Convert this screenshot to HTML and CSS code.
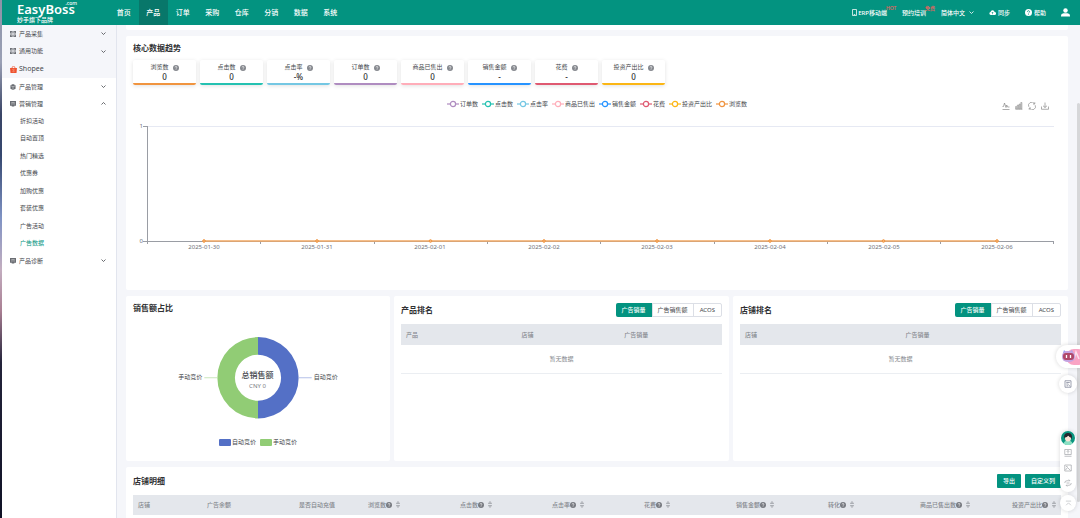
FILE: index.html
```html
<!DOCTYPE html>
<html lang="zh-CN">
<head>
<meta charset="utf-8">
<title>EasyBoss - 广告数据</title>
<link rel="stylesheet" href="styles.css">
</head>
<body>
<svg class="defs" aria-hidden="true">
  <symbol id="help" viewBox="0 0 12 12"><circle cx="6" cy="6" r="6" fill="currentColor"/><path d="M4.2 4.8a1.8 1.8 0 1 1 2.6 1.5q-.8.4-.8 1.2M6 8.6v1.2" fill="none" stroke="var(--mark, #fff)" stroke-width="1.3"/></symbol>
  <symbol id="down" viewBox="0 0 10 10"><path d="M1 3l4 4 4-4" fill="none" stroke="currentColor" stroke-width="1.6"/></symbol>
  <symbol id="up" viewBox="0 0 10 10"><path d="M1 7l4-4 4 4" fill="none" stroke="currentColor" stroke-width="1.6"/></symbol>
  <symbol id="sort" viewBox="0 0 8 14"><path d="M1 5l3-4 3 4zM1 9l3 4 3-4z" fill="none" stroke="currentColor" stroke-width="1.2"/></symbol>
  <symbol id="apps" viewBox="0 0 14 14"><path d="M0 0h6v6H0zM8 0h6v6H8zM0 8h6v6H0zM8 8h6v6H8z" fill="currentColor"/><path d="M2 3h2M10 3h2M2 11h2M10 11h2" stroke="#f5f6fa" stroke-width="1.600"/></symbol>
  <symbol id="board" viewBox="0 0 14 14"><path d="M0 0h14v11H0zM4 11h6v2H4z" fill="currentColor"/><path d="M3 4h8M3 7h3M8 7h3" stroke="#fff" stroke-width="1.200"/></symbol>
  <symbol id="ring" viewBox="0 0 12 8"><path d="M0 4h12" stroke="currentColor" stroke-width="1.200"/><circle cx="6" cy="4" r="2.600" fill="#fff" stroke="currentColor" stroke-width="1.200"/></symbol>
</svg>

<div class="edge"></div>
<div class="app">
  <header class="topbar">
    <a class="logo" href="#"><span class="brand">EasyBoss<i>.com</i></span><span class="slogan">妙手旗下品牌</span></a>
    <nav class="nav">
      <a href="#">首页</a><a href="#" class="active">产品</a><a href="#">订单</a><a href="#">采购</a><a href="#">仓库</a><a href="#">分销</a><a href="#">数据</a><a href="#">系统</a>
    </nav>
    <div class="tools">
      <a href="#" class="erp"><svg class="ic" viewBox="0 0 12 14"><path d="M2 1h8v12H2zM4.500 11h3" fill="none" stroke="currentColor" stroke-width="1.500"/></svg>ERP移动端<sup>HOT</sup></a>
      <a href="#" class="train">预约培训<sup>免费</sup></a>
      <a href="#" class="lang">简体中文<svg class="ic"><use href="#down"/></svg></a>
      <a href="#" class="sync"><svg class="ic" viewBox="0 0 14 12"><path d="M3.500 11a3.200 3.200 0 0 1-.5-6.200 4.200 4.200 0 0 1 8.200.2A3 3 0 0 1 11 11z" fill="currentColor"/><path d="M7 9.500V5.500M5.300 7L7 5.300 8.700 7" fill="none" stroke="#039380" stroke-width="1.200"/></svg>同步</a>
      <a href="#" class="assist"><svg class="ic"><use href="#help"/></svg>帮助</a>
      <a href="#" class="user" aria-label="账号"><svg viewBox="0 0 18 18"><circle cx="9" cy="5" r="4.500" fill="#fff"/><path d="M0 17v-2q0-4 5-4.500h8q5 .5 5 4.500v2z" fill="#fff"/></svg></a>
    </div>
  </header>

  <div class="body">
    <aside class="side">
      <div class="group head">
        <a href="#"><svg class="ic"><use href="#apps"/></svg>产品采集<svg class="arrow"><use href="#down"/></svg></a>
        <a href="#"><svg class="ic"><use href="#apps"/></svg>通用功能<svg class="arrow"><use href="#down"/></svg></a>
        <a href="#" class="shop"><svg class="ic" viewBox="0 0 14 14"><path d="M0 4h14l-1 10H1z" fill="#ee5330"/><path d="M4 4q0-3.300 3-3.300T10 4" fill="none" stroke="#ee5330" stroke-width="1.400"/><path d="M9 6.800q-3.500-1.300-3.700.5c0 1.600 3.700 1.200 3.500 3-.3 1.500-2.500 1.500-4 .3" fill="none" stroke="#f9b9a8"/></svg>Shopee</a>
      </div>
      <div class="group">
        <a href="#"><svg class="ic" viewBox="0 0 14 14"><path d="M7 0l6 3v8l-6 3-6-3V3z" fill="currentColor"/><path d="M1.500 4L7 6.500 12.500 4M7 6.500V13" fill="none" stroke="#fff"/></svg>产品管理<svg class="arrow"><use href="#down"/></svg></a>
        <a href="#"><svg class="ic"><use href="#board"/></svg>营销管理<svg class="arrow"><use href="#up"/></svg></a>
      </div>
      <div class="group sub">
        <a href="#">折扣活动</a><a href="#">自动置顶</a><a href="#">热门精选</a><a href="#">优惠券</a><a href="#">加购优惠</a><a href="#">套装优惠</a><a href="#">广告活动</a><a href="#" class="on">广告数据</a>
      </div>
      <div class="group">
        <a href="#"><svg class="ic"><use href="#board"/></svg>产品诊断<svg class="arrow"><use href="#down"/></svg></a>
      </div>
    </aside>

    <main class="main">
      <section class="panel filters"></section>

      <section class="panel trend">
        <h2>核心数据趋势</h2>
        <div class="cards">
          <div class="card c-orange"><span>浏览数<svg><use href="#help"/></svg></span><b>0</b></div>
          <div class="card c-teal"><span>点击数<svg><use href="#help"/></svg></span><b>0</b></div>
          <div class="card c-sky"><span>点击率<svg><use href="#help"/></svg></span><b>-%</b></div>
          <div class="card c-purple"><span>订单数<svg><use href="#help"/></svg></span><b>0</b></div>
          <div class="card c-pink"><span>商品已售出<svg><use href="#help"/></svg></span><b>0</b></div>
          <div class="card c-blue"><span>销售金额<svg><use href="#help"/></svg></span><b>-</b></div>
          <div class="card c-red"><span>花费<svg><use href="#help"/></svg></span><b>-</b></div>
          <div class="card c-gold"><span>投资产出比<svg><use href="#help"/></svg></span><b>0</b></div>
        </div>
        <div class="legend">
          <span><svg class="c-purple"><use href="#ring"/></svg>订单数</span>
          <span><svg class="c-teal"><use href="#ring"/></svg>点击数</span>
          <span><svg class="c-sky"><use href="#ring"/></svg>点击率</span>
          <span><svg class="c-pink"><use href="#ring"/></svg>商品已售出</span>
          <span><svg class="c-blue"><use href="#ring"/></svg>销售金额</span>
          <span><svg class="c-red"><use href="#ring"/></svg>花费</span>
          <span><svg class="c-gold"><use href="#ring"/></svg>投资产出比</span>
          <span><svg class="c-orange"><use href="#ring"/></svg>浏览数</span>
          <div class="toolbox">
            <svg viewBox="0 0 16 16"><path d="M1 9h2l2-7 3 9 1.500-5 1.500 4h4M1 15h14" fill="none" stroke="currentColor" stroke-width="1.300"/></svg>
            <svg viewBox="0 0 16 16"><path d="M1 9h2.500v5H1zM4.500 6H7v8H4.500zM8 4h2.500v10H8zM11.500 1H14v13h-2.500zM1 15h14" fill="#ccc" stroke="currentColor" stroke-width=".8"/></svg>
            <svg viewBox="0 0 16 16"><path d="M1.500 9.500a6.500 6.500 0 0 1 11.500-6M14.500 6.500a6.500 6.500 0 0 1-11.500 6M13.500.5v3.500H10M2.500 15.500V12H6" fill="none" stroke="currentColor" stroke-width="1.300"/></svg>
            <svg viewBox="0 0 16 16"><path d="M8 1v10M4 7.500L8 11l4-3.500M1 9v5.500h14V9" fill="none" stroke="currentColor" stroke-width="1.300"/></svg>
          </div>
        </div>
        <svg class="chart" viewBox="0 0 928 167" role="img" aria-label="核心数据趋势">
          <path d="M15 10.500H921" stroke="#e6e9f3"/>
          <path d="M10 10.500h5M14.500 10v118M10 125.500h911M127.500 126v2M241.500 126v2M354.500 126v2M467.500 126v2M581.500 126v2M694.500 126v2M807.500 126v2M920.500 126v2" fill="none" stroke="#9a9da4"/>
          <path d="M71 125H864" stroke="#f2a863" stroke-width="1.300"/>
          <g fill="#f7b77c" stroke="#f0943f" stroke-width="1"><circle cx="71" cy="125" r="1.300"/><circle cx="184" cy="125" r="1.300"/><circle cx="297.500" cy="125" r="1.300"/><circle cx="411" cy="125" r="1.300"/><circle cx="524" cy="125" r="1.300"/><circle cx="637" cy="125" r="1.300"/><circle cx="750.500" cy="125" r="1.300"/><circle cx="864" cy="125" r="1.300"/></g>
          <g class="tick"><text x="10" y="12" class="end">1</text><text x="10" y="127" class="end">0</text></g>
          <g class="tick mid"><text x="71" y="133">2025-01-30</text><text x="184" y="133">2025-01-31</text><text x="297" y="133">2025-02-01</text><text x="411" y="133">2025-02-02</text><text x="524" y="133">2025-02-03</text><text x="637" y="133">2025-02-04</text><text x="751" y="133">2025-02-05</text><text x="864" y="133">2025-02-06</text></g>
        </svg>
      </section>

      <div class="row">
        <section class="panel share">
          <h2>销售额占比</h2>
          <svg class="pie" viewBox="0 0 249 122" role="img" aria-label="销售额占比">
            <path d="M124.500 23a40.500 40.500 0 0 1 0 81v-17.500a23 23 0 0 0 0-46z" fill="#5470c6"/>
            <path d="M124.500 23a40.500 40.500 0 0 0 0 81v-17.500a23 23 0 0 1 0-46z" fill="#91cc75"/>
            <path d="M165 63.500h13" stroke="#b4c0e8"/><path d="M71 63.500h13" stroke="#c9e6bb"/>
            <text x="124" y="64" class="total">总销售额</text><text x="124" y="74" class="cny">CNY 0</text>
            <text x="180" y="65">自动竞价</text><text x="69" y="65" class="end">手动竞价</text>
          </svg>
          <div class="pielegend"><span class="auto">自动竞价</span><span class="manual">手动竞价</span></div>
        </section>

        <section class="panel rank">
          <div class="bar"><h2>产品排名</h2><div class="seg"><button class="on">广告销量</button><button>广告销售额</button><button>ACOS</button></div></div>
          <table class="t-product"><thead><tr><th>产品</th><th>店铺</th><th>广告销量</th></tr></thead><tbody><tr><td colspan="3">暂无数据</td></tr></tbody></table>
        </section>

        <section class="panel rank">
          <div class="bar"><h2>店铺排名</h2><div class="seg"><button class="on">广告销量</button><button>广告销售额</button><button>ACOS</button></div></div>
          <table class="t-shop"><thead><tr><th>店铺</th><th>广告销量</th></tr></thead><tbody><tr><td colspan="2">暂无数据</td></tr></tbody></table>
        </section>
      </div>

      <section class="panel detail">
        <div class="bar"><h2>店铺明细</h2><div class="actions"><button>导出</button><button>自定义列</button></div></div>
        <table class="t-detail">
          <colgroup><col class="s"><col class="m"><col class="s"><col class="m"><col class="m"><col class="m"><col class="m"><col class="m"><col class="m"><col class="m"><col></colgroup>
          <thead><tr>
            <th>店铺</th><th>广告余额</th><th>是否自动充值</th>
            <th>浏览数<svg class="q"><use href="#help"/></svg><svg class="s"><use href="#sort"/></svg></th>
            <th>点击数<svg class="q"><use href="#help"/></svg><svg class="s"><use href="#sort"/></svg></th>
            <th>点击率<svg class="q"><use href="#help"/></svg><svg class="s"><use href="#sort"/></svg></th>
            <th>花费<svg class="q"><use href="#help"/></svg><svg class="s"><use href="#sort"/></svg></th>
            <th>销售金额<svg class="q"><use href="#help"/></svg><svg class="s"><use href="#sort"/></svg></th>
            <th>转化<svg class="q"><use href="#help"/></svg><svg class="s"><use href="#sort"/></svg></th>
            <th>商品已售出数<svg class="q"><use href="#help"/></svg><svg class="s"><use href="#sort"/></svg></th>
            <th>投资产出比<svg class="q"><use href="#help"/></svg><svg class="s"><use href="#sort"/></svg></th>
          </tr></thead>
        </table>
      </section>
    </main>
  </div>
</div>

<div class="scroll"></div>
<button class="float robot" aria-label="智能助手"><svg viewBox="0 0 24 23"><rect x="10" y="4" width="20" height="16" rx="8" fill="#f9a3c4"/><path d="M18 14l2-7 3 7" fill="none" stroke="#fce0ec" stroke-width="1.500"/><path d="M7 8l1-3 2 2h4l2-2 1 3" fill="#8f9cf5"/><rect x="6" y="6" width="13" height="11" rx="5" fill="#c5a3e0"/><rect x="7" y="8" width="11" height="7" rx="3" fill="#b0486a"/><path d="M10.500 10v3M14.500 10v3" stroke="#fff" stroke-width="1.300"/></svg></button>
<button class="float note" aria-label="记录"><svg viewBox="0 0 16 16"><path d="M2 1.500h12v13H2zM4.500 5h7M4.500 8h4M9 9l3 4M5 11.500h3" fill="none" stroke="#757b91" stroke-width="1.400"/></svg></button>
<div class="float dock">
  <svg class="avatar" viewBox="0 0 28 28"><circle cx="14" cy="14" r="14" fill="#0a957f"/><path d="M5 25q2-6 9-6t9 6a14 14 0 0 1-18 0z" fill="#8be0c4"/><path d="M7 15Q4 5 13 4q9-1 9 8l-1 4-7-5z" fill="#26272e"/><circle cx="14" cy="15" r="6" fill="#fbe3d6"/><path d="M7.500 13q5 0 7-4 2 4 6 4.500Q20 5 14 5t-6.500 8z" fill="#26272e"/></svg>
  <svg viewBox="0 0 16 16"><path d="M1.500 1h13v10h-13zM8 3v6M5.500 5.500L8 3l2.500 2.500M1 14.500h14" fill="none" stroke="currentColor" stroke-width="1.300"/></svg>
  <svg viewBox="0 0 16 16"><path d="M1.500 2h13v12h-13zM3 12l4-5 3 3 3 3M4 5h3" fill="none" stroke="currentColor" stroke-width="1.300"/></svg>
  <svg viewBox="0 0 16 16"><path d="M1.500 8q0-4.500 4.500-4.500h6L9.500 1M14.500 8q0 4.500-4.500 4.500H4L6.500 15M5 8h6" fill="none" stroke="currentColor" stroke-width="1.300"/></svg>
</div>
<button class="float top" aria-label="回到顶部"><svg viewBox="0 0 16 16"><path d="M2 2.500h12M2.500 12L8 6.500l5.500 5.500" fill="none" stroke="#b0b3b9" stroke-width="1.400"/></svg></button>
</body>
</html>
```

FILE: styles.css
```css
* { box-sizing: border-box; }
body {
  margin: 0; height: 100vh; overflow: hidden; display: flex;
  background: #f5f6fa; color: #45484d;
  font: 6px/10px "Noto Sans", "Noto Sans CJK SC", sans-serif;
}
a { color: inherit; text-decoration: none; }
button { font: inherit; color: inherit; border: 0; padding: 0; background: none; white-space: nowrap; }
h2 { margin: 0; font-size: 8px; line-height: 12px; font-weight: 600; color: #303133; }
svg { display: block; flex: none; }
.defs { position: absolute; width: 0; height: 0; }

.edge { width: 2px; background: linear-gradient(#8d93a8 0, #9aa0b5 12%, #3a4566 22%, #35476f 30%, #7f93c4 42%, #c3aec0 52%, #a97f93 60%, #23233a 70%, #101226 100%); }
.app { flex: 1; min-width: 0; display: flex; flex-direction: column; }

.topbar { height: 25px; flex: none; display: flex; background: #039380; color: #fff; font-weight: 500; }
.logo { width: 107px; padding-left: 15px; display: flex; flex-direction: column; }
.brand { position: relative; width: 60px; padding-top: 2px; font-size: 13px; line-height: 14px; font-weight: 600; }
.brand i { position: absolute; right: 0; top: 0; font-size: 5px; line-height: 6px; font-style: normal; font-weight: 500; }
.slogan { line-height: 8px; }
.nav { width: 236px; display: grid; grid-template-columns: repeat(8, 1fr); font-size: 7px; line-height: 25px; text-align: center; }
.nav .active { background: #08776a; }
.tools { margin-left: auto; display: flex; align-items: center; padding-right: 10px; }
.tools a { display: flex; align-items: center; gap: 2px; position: relative; }
.tools .ic { width: 7px; height: 7px; }
.tools sup { position: absolute; left: 100%; top: -3px; margin-left: -1px; font-size: 5px; line-height: 6px; color: #f0605c; white-space: nowrap; }
.tools .erp { gap: 0; margin-right: 15px; }
.tools .train { margin-right: 15px; }
.tools .lang { margin-right: 15px; gap: 4px; }
.tools .lang .ic { width: 5px; height: 5px; }
.tools .sync { margin-right: 15px; }
.tools .assist { margin-right: 15px; --mark: #039380; }
.tools .user svg { width: 9px; height: 9px; }

.body { flex: 1; min-height: 0; display: flex; }
.side { width: 115px; flex: none; background: #fff; border-right: 1px solid #e2e5ee; }
.group { display: grid; grid-auto-rows: minmax(17px, 1fr); }
.group.head { height: 53px; background: #f5f6fa; }
.group.sub { height: 140px; }
.group a { display: flex; align-items: center; gap: 3px; padding: 0 10px 0 8px; }
.group.sub a { padding-left: 18px; }
.group .ic { width: 6px; height: 6px; color: #6a6d73; }
.group .shop { font-size: 7px; }
.group .shop .ic { width: 7px; height: 7px; margin-right: -1px; }
.group .arrow { width: 5px; height: 5px; margin-left: auto; }
.group .on { color: #039380; }

.main { flex: 1; min-width: 0; padding: 0 12px 0 9px; display: flex; flex-direction: column; gap: 6px; }
.panel { background: #fff; border-radius: 2px; padding: 7px; min-width: 0; }
.filters { height: 5px; padding: 0; flex: none; border-radius: 0 0 2px 2px; }
.trend { padding: 6px 7px 7px; flex: none; }

.c-orange { color: #f0943f; } .c-teal { color: #24c1b1; } .c-sky { color: #74c7e3; } .c-purple { color: #af8cc0; }
.c-pink { color: #ffadb9; } .c-blue { color: #2693ff; } .c-red { color: #df5971; } .c-gold { color: #fbb614; }
.cards { display: flex; gap: 4px; margin-top: 6px; }
.card { width: 63px; padding: 3px 0 2px; display: flex; flex-direction: column; align-items: center; border-bottom: 2px solid currentColor; border-radius: 2px; box-shadow: 0 1px 4px rgba(0, 0, 0, .12); }
.card span { display: flex; align-items: center; gap: 4px; line-height: 9px; color: #45484d; }
.card span svg { width: 6px; height: 6px; color: #85888e; }
.card b { font-size: 8px; line-height: 9px; font-weight: 500; color: #303133; }

.legend { position: relative; display: flex; justify-content: center; gap: 4px; margin-top: 14px; }
.legend span { display: flex; align-items: center; gap: 1px; }
.legend span svg { width: 12px; height: 8px; }
.toolbox { position: absolute; right: 12px; top: 3px; display: flex; gap: 5px; color: #808080; }
.toolbox svg { width: 8px; height: 8px; }
.chart { width: 100%; height: auto; margin-top: 7px; }
.chart .tick { fill: #6e7079; }
.mid { text-anchor: middle; }
.end { text-anchor: end; }

.row { display: grid; grid-template-columns: 264fr 335fr 335fr; column-gap: 4px; flex: none; }
.share { padding-top: 6px; padding-bottom: 14px; }
.pie { width: 100%; height: auto; fill: #45484d; }
.pie .total { font-size: 8px; font-weight: 500; text-anchor: middle; }
.pie .cny { fill: #777a80; text-anchor: middle; }
.pielegend { display: flex; justify-content: center; gap: 4px; margin-top: 1px; }
.pielegend span { display: flex; align-items: center; gap: 1px; }
.pielegend span::before { content: ""; width: 12px; height: 7px; border-radius: 1px; background: #5470c6; }
.pielegend .manual::before { background: #91cc75; }

.bar { display: flex; justify-content: space-between; align-items: center; height: 14px; margin-bottom: 7px; }
.seg { display: flex; border: 1px solid #dcdfe6; border-radius: 2px; }
.seg button { line-height: 12px; padding: 0 5px; border-left: 1px solid #dcdfe6; }
.seg button:last-child { padding: 0 6px; }
.seg .on { margin: -1px 0 -1px -1px; line-height: 14px; padding: 0 6px; background: #039380; color: #fff; border: 0; border-radius: 2px 0 0 2px; font-weight: 500; }
.actions { display: flex; gap: 4px; }
.actions button { padding: 0 6px; line-height: 14px; background: #039380; color: #fff; border-radius: 1px; font-weight: 500; }

table { width: 100%; border-collapse: collapse; table-layout: fixed; }
th { height: 21px; padding: 0 0 0 5px; text-align: left; font-weight: 500; background: #e4e7ec; color: #85888e; white-space: nowrap; }
td { height: 28px; padding: 0; text-align: center; color: #85888e; border-bottom: 1px solid #ebeef2; }
.t-product th:first-child { width: 36%; }
.t-product th:nth-child(2) { width: 32%; }
.detail { flex: none; }
.t-detail th { height: 20px; }
.t-detail col.s { width: 69px; }
.t-detail col.m { width: 92px; }
th svg { display: inline-block; vertical-align: -1px; }
th .q { width: 6px; height: 6px; color: #777a80; }
th .s { width: 4px; height: 7px; margin-left: 4px; }

.scroll { position: fixed; right: 0; top: 103px; bottom: 16px; width: 3px; border-radius: 2px; background: #d6d7d9; }
.float { position: fixed; display: grid; place-items: center; background: #fff; box-shadow: 0 0 4px rgba(0, 0, 0, .16); }
.robot { right: 0; top: 345px; border-radius: 12px 0 0 12px; overflow: hidden; }
.robot svg { width: 24px; height: 23px; }
.note { right: 3px; top: 375px; width: 18px; height: 18px; border-radius: 50%; }
.note svg { width: 8px; height: 8px; }
.dock { right: 4px; top: 431px; width: 16px; border-radius: 8px; padding-bottom: 5px; row-gap: 7px; color: #9a9da3; }
.dock svg { width: 8px; height: 8px; }
.dock .avatar { width: 14px; height: 14px; margin-bottom: -3px; }
.top { right: 4px; bottom: 7px; width: 16px; height: 16px; border-radius: 50%; }
.top svg { width: 7px; height: 7px; }
```
